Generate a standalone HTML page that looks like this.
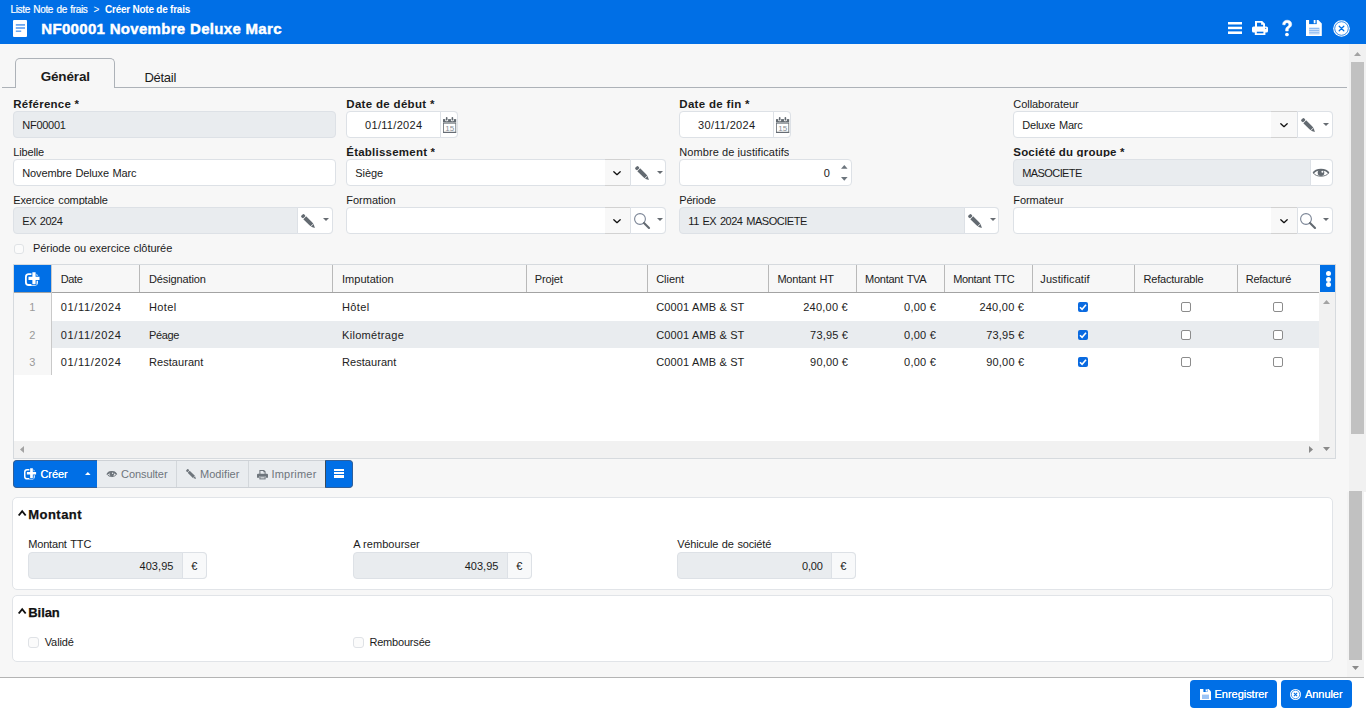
<!DOCTYPE html>
<html lang="fr">
<head>
<meta charset="utf-8">
<title>Note de frais</title>
<style>
*{box-sizing:border-box;margin:0;padding:0}
html,body{width:1370px;height:718px;overflow:hidden;background:#fff}
body{position:relative;font-family:"Liberation Sans",sans-serif;font-size:12px;color:#1b1b1b}
.abs{position:absolute}
.t{position:absolute;white-space:nowrap}
svg{position:absolute;display:block;overflow:visible}
</style>
</head>
<body>
<div class="abs" style="left:0px;top:0px;width:1366px;height:44px;background:#006fe6;"></div>
<div class="abs" style="left:0px;top:44px;width:1366px;height:633px;background:#f7f7f7;"></div>
<div class="abs" style="left:0px;top:677px;width:1364px;height:1px;background:#b4b4b4;"></div>
<div class="t" style="left:10.50px;top:3px;font-size:10px;line-height:13px;letter-spacing:-0.347px;color:#fff;word-spacing:1.00px;-webkit-text-stroke:0.2px #fff;">Liste Note de frais</div>
<div class="t" style="left:93.50px;top:3px;font-size:10px;line-height:13px;letter-spacing:0.160px;color:#fff;">&gt;</div>
<div class="t" style="left:105.00px;top:3px;font-size:10px;line-height:13px;letter-spacing:-0.236px;color:#fff;font-weight:bold;">Créer Note de frais</div>
<svg style="left:13px;top:20px" width="14" height="17" viewBox="0 0 14 17"><rect x="0" y="0" width="14" height="17" rx="1" fill="#fff"/><rect x="2.8" y="4.1" width="9.2" height="1.6" fill="#5c9ff0"/><rect x="2.8" y="7.2" width="9.2" height="1.6" fill="#5c9ff0"/><rect x="2.8" y="10.5" width="5.4" height="1.4" fill="#5c9ff0"/></svg>
<div class="t" style="left:41.30px;top:19px;font-size:15px;line-height:19px;letter-spacing:0.312px;color:#fff;font-weight:bold;-webkit-text-stroke:0.45px #fff;">NF00001 Novembre Deluxe Marc</div>
<svg style="left:1228px;top:22px" width="14" height="12" viewBox="0 0 14 12"><rect x="0" y="0" width="14" height="2.5" fill="#fff"/><rect x="0" y="4.7" width="14" height="2.5" fill="#fff"/><rect x="0" y="9.4" width="14" height="2.6" fill="#fff"/></svg>
<svg style="left:1252px;top:21px" width="16" height="14" viewBox="0 0 16 14"><path d="M3 0 H10.2 L13 2.8 V6.2 H3 Z" fill="#fff"/><path d="M5 1.7 H9.1 V3.7 H11.1 V6.2 H5 Z" fill="#006fe6"/><rect x="0" y="5.4" width="16" height="6.1" rx="1.6" fill="#fff"/><rect x="2.8" y="9" width="10.6" height="5" fill="#fff"/><rect x="4.8" y="10.7" width="6.6" height="1.6" fill="#006fe6"/><circle cx="13.7" cy="7.3" r="0.6" fill="#006fe6"/></svg>
<svg style="left:1282px;top:20px" width="10" height="16.5" viewBox="0 0 10 16.5"><path d="M0.6 4.6 C0.6 1.8 2.6 0.2 5.1 0.2 C7.8 0.2 9.7 1.8 9.7 4.2 C9.7 6.2 8.6 7 7.4 7.9 C6.5 8.6 6.3 9 6.3 10.3 V11 H3.6 V10 C3.6 8.3 4.2 7.5 5.3 6.7 C6.3 6 6.8 5.5 6.8 4.5 C6.8 3.4 6.1 2.7 5 2.7 C3.8 2.7 3.2 3.5 3.1 4.9 Z" fill="#fff" stroke="#fff" stroke-width="0.5"/><circle cx="4.95" cy="14.5" r="1.85" fill="#fff"/></svg>
<svg style="left:1306px;top:20px" width="16" height="16" viewBox="0 0 16 16"><path d="M0 0 H12.3 L15.8 3.5 V16 H0 Z" fill="#fff"/><rect x="3.1" y="-0.2" width="7.6" height="4.3" fill="#006fe6"/><rect x="7.7" y="0" width="1.8" height="3.3" fill="#fff"/><rect x="3.1" y="7.7" width="10.3" height="6.6" fill="#8fbcf3"/><rect x="3.1" y="9.2" width="10.3" height="0.8" fill="#dbe9fb"/><rect x="3.1" y="11" width="10.3" height="0.8" fill="#dbe9fb"/><rect x="3.1" y="12.8" width="10.3" height="0.8" fill="#dbe9fb"/></svg>
<svg style="left:1333px;top:19.7px" width="17" height="17" viewBox="0 0 17 17"><circle cx="8.5" cy="8.5" r="8.3" fill="#fff"/><circle cx="8.5" cy="8.5" r="6.8" fill="none" stroke="#006fe6" stroke-width="0.8"/><path d="M6.2 6.2 L10.8 10.8 M10.8 6.2 L6.2 10.8" stroke="#006fe6" stroke-width="1.25" stroke-linecap="round"/></svg>
<div class="abs" style="left:2px;top:87px;width:1345px;height:1px;background:#adb2b8;"></div>
<div class="abs" style="left:15px;top:58px;width:100px;height:30px;border:1px solid #adb2b8;border-bottom:none;border-radius:5px 5px 0 0;background:#f7f7f7;"></div>
<div class="t" style="left:40.65px;top:68px;font-size:13.5px;line-height:17px;letter-spacing:-0.139px;color:#1b1b1b;font-weight:bold;">Général</div>
<div class="t" style="left:144.50px;top:69px;font-size:13px;line-height:17px;letter-spacing:-0.289px;color:#1b1b1b;">Détail</div>
<div class="t" style="left:13.30px;top:97px;font-size:11.5px;line-height:14px;letter-spacing:0.247px;color:#1b1b1b;font-weight:bold;height:12px;overflow:hidden;">Référence *</div>
<div class="abs" style="left:13px;top:111px;width:323px;height:27px;border:1px solid #dde1e6;border-radius:4px;background:#e9ecef;"></div>
<div class="t" style="left:22.30px;top:118px;font-size:11px;line-height:14px;letter-spacing:-0.279px;color:#1b1b1b;">NF00001</div>
<div class="t" style="left:346.30px;top:97px;font-size:11.5px;line-height:14px;letter-spacing:0.313px;color:#1b1b1b;font-weight:bold;height:12px;overflow:hidden;">Date de début *</div>
<div class="abs" style="left:346px;top:111px;width:112px;height:27px;border:1px solid #dde1e6;border-radius:4px;background:#fff;"></div>
<div class="abs" style="left:440px;top:111px;width:18px;height:27px;border:1px solid #dde1e6;border-radius:0 4px 4px 0;background:#fff;"></div>
<div class="t" style="left:365.05px;top:118px;font-size:11px;line-height:14px;letter-spacing:0.306px;color:#1b1b1b;">01/11/2024</div>
<svg style="left:442.8px;top:117px" width="13.2" height="16" viewBox="0 0 13.2 16"><rect x="0" y="2.1" width="13.2" height="3.2" fill="#636a71"/><rect x="0" y="5.3" width="13.2" height="0.9" fill="#a3a8ad"/><rect x="0.4" y="6.2" width="12.4" height="9.2" fill="#fff" stroke="#636a71" stroke-width="0.8"/><rect x="0" y="14.8" width="13.2" height="1.1" fill="#636a71"/><rect x="2.2" y="1.7" width="3" height="2.5" rx="1" fill="#fff"/><rect x="7.9" y="1.7" width="3" height="2.5" rx="1" fill="#fff"/><rect x="2.9" y="0" width="1.6" height="3.5" rx="0.7" fill="#636a71"/><rect x="8.6" y="0" width="1.6" height="3.5" rx="0.7" fill="#636a71"/><text x="6.7" y="13.8" font-family="Liberation Sans, sans-serif" font-size="8" text-anchor="middle" fill="#8a8f95">15</text></svg>
<div class="t" style="left:679.30px;top:97px;font-size:11.5px;line-height:14px;letter-spacing:0.311px;color:#1b1b1b;font-weight:bold;height:12px;overflow:hidden;">Date de fin *</div>
<div class="abs" style="left:679px;top:111px;width:112px;height:27px;border:1px solid #dde1e6;border-radius:4px;background:#fff;"></div>
<div class="abs" style="left:773px;top:111px;width:18px;height:27px;border:1px solid #dde1e6;border-radius:0 4px 4px 0;background:#fff;"></div>
<div class="t" style="left:698.05px;top:118px;font-size:11px;line-height:14px;letter-spacing:0.306px;color:#1b1b1b;">30/11/2024</div>
<svg style="left:775.8px;top:117px" width="13.2" height="16" viewBox="0 0 13.2 16"><rect x="0" y="2.1" width="13.2" height="3.2" fill="#636a71"/><rect x="0" y="5.3" width="13.2" height="0.9" fill="#a3a8ad"/><rect x="0.4" y="6.2" width="12.4" height="9.2" fill="#fff" stroke="#636a71" stroke-width="0.8"/><rect x="0" y="14.8" width="13.2" height="1.1" fill="#636a71"/><rect x="2.2" y="1.7" width="3" height="2.5" rx="1" fill="#fff"/><rect x="7.9" y="1.7" width="3" height="2.5" rx="1" fill="#fff"/><rect x="2.9" y="0" width="1.6" height="3.5" rx="0.7" fill="#636a71"/><rect x="8.6" y="0" width="1.6" height="3.5" rx="0.7" fill="#636a71"/><text x="6.7" y="13.8" font-family="Liberation Sans, sans-serif" font-size="8" text-anchor="middle" fill="#8a8f95">15</text></svg>
<div class="t" style="left:1013.30px;top:97px;font-size:11px;line-height:14px;letter-spacing:-0.049px;color:#1b1b1b;height:12px;overflow:hidden;">Collaborateur</div>
<div class="abs" style="left:1013px;top:111px;width:320px;height:27px;border:1px solid #dde1e6;border-radius:4px;background:#fff;"></div>
<div class="t" style="left:1022.30px;top:118px;font-size:11px;line-height:14px;letter-spacing:-0.240px;color:#1b1b1b;word-spacing:1.10px;">Deluxe Marc</div>
<div class="abs" style="left:1271px;top:111px;width:26px;height:27px;background:#f8f8f8;border-top:1px solid #d2d2d2;border-bottom:1px solid #d2d2d2;"></div>
<div class="abs" style="left:1297px;top:111px;width:36px;height:27px;border:1px solid #dde1e6;border-radius:0 4px 4px 0;background:#fff;"></div>
<svg style="left:1279.8px;top:123.3px" width="8" height="4.4" viewBox="0 0 8 4.4"><path d="M0.8 0.7 L4 3.7 L7.2 0.7" fill="none" stroke="#111" stroke-width="1.3" stroke-linecap="round" stroke-linejoin="round"/></svg>
<svg style="left:1301px;top:117.5px" width="14.0" height="14.0" viewBox="0 0 14 14"><g fill="#636a71" transform="translate(1.6,1.6) rotate(45)"><rect x="-0.8" y="-2" width="3.2" height="4" rx="1.2"/><rect x="3.0" y="-2" width="10.2" height="4"/><path d="M13.7 -1.9 L17.4 0 L13.7 1.9 Z"/></g></svg>
<svg style="left:1323.2px;top:123.1px" width="6" height="3" viewBox="0 0 6 3"><path d="M0 0 H6 L3 3 Z" fill="#676c72"/></svg>
<div class="t" style="left:13.30px;top:145px;font-size:11px;line-height:14px;letter-spacing:-0.172px;color:#1b1b1b;height:12px;overflow:hidden;">Libelle</div>
<div class="abs" style="left:13px;top:159px;width:323px;height:27px;border:1px solid #dde1e6;border-radius:4px;background:#fff;"></div>
<div class="t" style="left:22.30px;top:166px;font-size:11px;line-height:14px;letter-spacing:-0.150px;color:#1b1b1b;word-spacing:0.77px;">Novembre Deluxe Marc</div>
<div class="t" style="left:346.30px;top:145px;font-size:11.5px;line-height:14px;letter-spacing:0.224px;color:#1b1b1b;font-weight:bold;height:12px;overflow:hidden;">Établissement *</div>
<div class="abs" style="left:346px;top:159px;width:320px;height:27px;border:1px solid #dde1e6;border-radius:4px;background:#fff;"></div>
<div class="t" style="left:355.30px;top:166px;font-size:11px;line-height:14px;letter-spacing:-0.072px;color:#1b1b1b;">Siège</div>
<div class="abs" style="left:605px;top:159px;width:25px;height:27px;background:#f8f8f8;border-top:1px solid #d2d2d2;border-bottom:1px solid #d2d2d2;"></div>
<div class="abs" style="left:630px;top:159px;width:36px;height:27px;border:1px solid #dde1e6;border-radius:0 4px 4px 0;background:#fff;"></div>
<svg style="left:613.3px;top:171.1px" width="8" height="4.4" viewBox="0 0 8 4.4"><path d="M0.8 0.7 L4 3.7 L7.2 0.7" fill="none" stroke="#111" stroke-width="1.3" stroke-linecap="round" stroke-linejoin="round"/></svg>
<svg style="left:635px;top:166px" width="14.0" height="14.0" viewBox="0 0 14 14"><g fill="#636a71" transform="translate(1.6,1.6) rotate(45)"><rect x="-0.8" y="-2" width="3.2" height="4" rx="1.2"/><rect x="3.0" y="-2" width="10.2" height="4"/><path d="M13.7 -1.9 L17.4 0 L13.7 1.9 Z"/></g></svg>
<svg style="left:657px;top:171.0px" width="6" height="3" viewBox="0 0 6 3"><path d="M0 0 H6 L3 3 Z" fill="#676c72"/></svg>
<div class="t" style="left:679.30px;top:145px;font-size:11px;line-height:14px;letter-spacing:0.082px;color:#1b1b1b;height:12px;overflow:hidden;">Nombre de justificatifs</div>
<div class="abs" style="left:679px;top:159px;width:173px;height:27px;border:1px solid #dde1e6;border-radius:4px;background:#fff;"></div>
<div class="t" style="left:823.70px;top:166px;font-size:11px;line-height:14px;letter-spacing:-0.518px;color:#1b1b1b;">0</div>
<svg style="left:840.7px;top:165px" width="6.6" height="3.8" viewBox="0 0 6.6 3.8"><path d="M0 3.8 L3.3 0 L6.6 3.8 Z" fill="#6c757d"/></svg>
<svg style="left:840.7px;top:176.6px" width="6.6" height="3.8" viewBox="0 0 6.6 3.8"><path d="M0 0 L3.3 3.8 L6.6 0 Z" fill="#6c757d"/></svg>
<div class="t" style="left:1013.30px;top:145px;font-size:11.5px;line-height:14px;letter-spacing:0.180px;color:#1b1b1b;font-weight:bold;height:12px;overflow:hidden;">Société du groupe *</div>
<div class="abs" style="left:1013px;top:159px;width:320px;height:27px;border:1px solid #dde1e6;border-radius:4px;background:#e9ecef;"></div>
<div class="t" style="left:1022.30px;top:166px;font-size:11px;line-height:14px;letter-spacing:-0.598px;color:#1b1b1b;">MASOCIETE</div>
<div class="abs" style="left:1310px;top:159px;width:23px;height:27px;border:1px solid #dde1e6;border-radius:0 4px 4px 0;background:#fff;"></div>
<svg style="left:1313.3px;top:167.8px" width="16" height="10" viewBox="0 0 16 10"><path d="M0.3 5 C3 9.3 13 9.3 15.7 5" fill="none" stroke="#636a71" stroke-width="0.9"/><path d="M0.3 5 C3 0.5 13 0.5 15.7 5" fill="none" stroke="#636a71" stroke-width="1.7"/><circle cx="8" cy="4.7" r="3.3" fill="#636a71"/><circle cx="9.4" cy="3.7" r="1" fill="#fff"/></svg>
<div class="t" style="left:13.30px;top:193px;font-size:11px;line-height:14px;letter-spacing:-0.149px;color:#1b1b1b;word-spacing:1.10px;height:12px;overflow:hidden;">Exercice comptable</div>
<div class="abs" style="left:13px;top:207px;width:320px;height:27px;border:1px solid #dde1e6;border-radius:4px;background:#e9ecef;"></div>
<div class="t" style="left:22.30px;top:214px;font-size:11px;line-height:14px;letter-spacing:-0.457px;color:#1b1b1b;word-spacing:1.10px;">EX 2024</div>
<div class="abs" style="left:297px;top:207px;width:36px;height:27px;border:1px solid #dde1e6;border-radius:0 4px 4px 0;background:#fff;"></div>
<svg style="left:301.4px;top:214px" width="14.0" height="14.0" viewBox="0 0 14 14"><g fill="#636a71" transform="translate(1.6,1.6) rotate(45)"><rect x="-0.8" y="-2" width="3.2" height="4" rx="1.2"/><rect x="3.0" y="-2" width="10.2" height="4"/><path d="M13.7 -1.9 L17.4 0 L13.7 1.9 Z"/></g></svg>
<svg style="left:322.9px;top:218.0px" width="6" height="3" viewBox="0 0 6 3"><path d="M0 0 H6 L3 3 Z" fill="#676c72"/></svg>
<div class="t" style="left:346.30px;top:193px;font-size:11px;line-height:14px;letter-spacing:-0.013px;color:#1b1b1b;height:12px;overflow:hidden;">Formation</div>
<div class="abs" style="left:346px;top:207px;width:320px;height:27px;border:1px solid #dde1e6;border-radius:4px;background:#fff;"></div>
<div class="abs" style="left:605px;top:207px;width:25px;height:27px;background:#f8f8f8;border-top:1px solid #d2d2d2;border-bottom:1px solid #d2d2d2;"></div>
<div class="abs" style="left:630px;top:207px;width:36px;height:27px;border:1px solid #dde1e6;border-radius:0 4px 4px 0;background:#fff;"></div>
<svg style="left:613.3px;top:219.1px" width="8" height="4.4" viewBox="0 0 8 4.4"><path d="M0.8 0.7 L4 3.7 L7.2 0.7" fill="none" stroke="#111" stroke-width="1.3" stroke-linecap="round" stroke-linejoin="round"/></svg>
<svg style="left:633.5px;top:212.9px" width="17" height="17" viewBox="0 0 17 17"><circle cx="6" cy="6" r="5.4" fill="none" stroke="#7b8596" stroke-width="1.1"/><path d="M10 10 L15 15" stroke="#636a71" stroke-width="2.1" stroke-linecap="round"/></svg>
<svg style="left:657px;top:218.0px" width="6" height="3" viewBox="0 0 6 3"><path d="M0 0 H6 L3 3 Z" fill="#676c72"/></svg>
<div class="t" style="left:679.30px;top:193px;font-size:11px;line-height:14px;letter-spacing:-0.216px;color:#1b1b1b;height:12px;overflow:hidden;">Période</div>
<div class="abs" style="left:679px;top:207px;width:320px;height:27px;border:1px solid #dde1e6;border-radius:4px;background:#e9ecef;"></div>
<div class="t" style="left:688.30px;top:214px;font-size:11px;line-height:14px;letter-spacing:-0.466px;color:#1b1b1b;word-spacing:1.10px;">11 EX 2024 MASOCIETE</div>
<div class="abs" style="left:964px;top:207px;width:35px;height:27px;border:1px solid #dde1e6;border-radius:0 4px 4px 0;background:#fff;"></div>
<svg style="left:967.8px;top:214px" width="14.0" height="14.0" viewBox="0 0 14 14"><g fill="#636a71" transform="translate(1.6,1.6) rotate(45)"><rect x="-0.8" y="-2" width="3.2" height="4" rx="1.2"/><rect x="3.0" y="-2" width="10.2" height="4"/><path d="M13.7 -1.9 L17.4 0 L13.7 1.9 Z"/></g></svg>
<svg style="left:990px;top:218.0px" width="6" height="3" viewBox="0 0 6 3"><path d="M0 0 H6 L3 3 Z" fill="#676c72"/></svg>
<div class="t" style="left:1013.30px;top:193px;font-size:11px;line-height:14px;letter-spacing:-0.059px;color:#1b1b1b;height:12px;overflow:hidden;">Formateur</div>
<div class="abs" style="left:1013px;top:207px;width:320px;height:27px;border:1px solid #dde1e6;border-radius:4px;background:#fff;"></div>
<div class="abs" style="left:1271px;top:207px;width:26px;height:27px;background:#f8f8f8;border-top:1px solid #d2d2d2;border-bottom:1px solid #d2d2d2;"></div>
<div class="abs" style="left:1297px;top:207px;width:36px;height:27px;border:1px solid #dde1e6;border-radius:0 4px 4px 0;background:#fff;"></div>
<svg style="left:1279.8px;top:219.1px" width="8" height="4.4" viewBox="0 0 8 4.4"><path d="M0.8 0.7 L4 3.7 L7.2 0.7" fill="none" stroke="#111" stroke-width="1.3" stroke-linecap="round" stroke-linejoin="round"/></svg>
<svg style="left:1300.2px;top:212.9px" width="17" height="17" viewBox="0 0 17 17"><circle cx="6" cy="6" r="5.4" fill="none" stroke="#7b8596" stroke-width="1.1"/><path d="M10 10 L15 15" stroke="#636a71" stroke-width="2.1" stroke-linecap="round"/></svg>
<svg style="left:1323.2px;top:218.0px" width="6" height="3" viewBox="0 0 6 3"><path d="M0 0 H6 L3 3 Z" fill="#676c72"/></svg>
<div class="abs" style="left:14px;top:243.5px;width:10px;height:10px;border:1px solid #e0e3e6;border-radius:3px;background:#fbfbfb;"></div>
<div class="t" style="left:32.90px;top:241px;font-size:11px;line-height:14px;letter-spacing:-0.044px;color:#1b1b1b;word-spacing:0.40px;">Période ou exercice clôturée</div>
<div class="abs" style="left:13px;top:264px;width:1323px;height:195px;border:1px solid #d6dade;background:#fff;"></div>
<div class="abs" style="left:14px;top:265px;width:1306px;height:27px;background:#f7f7f7;"></div>
<div class="abs" style="left:14px;top:292px;width:1306px;height:1px;background:#a3a3a3;"></div>
<div class="abs" style="left:14px;top:265px;width:37px;height:27px;background:#006fe6;"></div>
<svg style="left:25.4px;top:272.3px" width="14.639999999999999" height="13.92" viewBox="0 0 12.2 11.6"><rect x="0.75" y="1.8" width="9.3" height="9.05" rx="2.4" fill="none" stroke="#fff" stroke-width="1.5"/><path d="M7.5 0 V11 M2.1 5.25 H12.2" stroke="#006fe6" stroke-width="4.2"/><path d="M7.5 0.2 V10.2 M2.9 5.25 H12.1" stroke="#fff" stroke-width="2.7"/></svg>
<div class="abs" style="left:14px;top:293px;width:37px;height:82px;background:#f7f7f7;"></div>
<div class="abs" style="left:51px;top:265px;width:1px;height:110px;background:#c9c9c9;"></div>
<div class="abs" style="left:52px;top:321px;width:1267px;height:27px;background:#e9ecef;"></div>
<div class="abs" style="left:139px;top:265px;width:1px;height:27px;background:#b9b9b9;"></div>
<div class="abs" style="left:332px;top:265px;width:1px;height:27px;background:#b9b9b9;"></div>
<div class="abs" style="left:526px;top:265px;width:1px;height:27px;background:#b9b9b9;"></div>
<div class="abs" style="left:647px;top:265px;width:1px;height:27px;background:#b9b9b9;"></div>
<div class="abs" style="left:768px;top:265px;width:1px;height:27px;background:#b9b9b9;"></div>
<div class="abs" style="left:856px;top:265px;width:1px;height:27px;background:#b9b9b9;"></div>
<div class="abs" style="left:944px;top:265px;width:1px;height:27px;background:#b9b9b9;"></div>
<div class="abs" style="left:1032px;top:265px;width:1px;height:27px;background:#b9b9b9;"></div>
<div class="abs" style="left:1134px;top:265px;width:1px;height:27px;background:#b9b9b9;"></div>
<div class="abs" style="left:1237px;top:265px;width:1px;height:27px;background:#b9b9b9;"></div>
<div class="t" style="left:60.80px;top:272px;font-size:11px;line-height:14px;letter-spacing:-0.409px;color:#222;">Date</div>
<div class="t" style="left:149.00px;top:272px;font-size:11px;line-height:14px;letter-spacing:-0.127px;color:#222;">Désignation</div>
<div class="t" style="left:342.00px;top:272px;font-size:11px;line-height:14px;letter-spacing:0.034px;color:#222;">Imputation</div>
<div class="t" style="left:534.80px;top:272px;font-size:11px;line-height:14px;letter-spacing:-0.139px;color:#222;">Projet</div>
<div class="t" style="left:656.20px;top:272px;font-size:11px;line-height:14px;letter-spacing:-0.037px;color:#222;">Client</div>
<div class="t" style="left:777.40px;top:272px;font-size:11px;line-height:14px;letter-spacing:-0.200px;color:#222;word-spacing:0.93px;">Montant HT</div>
<div class="t" style="left:865.10px;top:272px;font-size:11px;line-height:14px;letter-spacing:-0.271px;color:#222;word-spacing:1.10px;">Montant TVA</div>
<div class="t" style="left:953.20px;top:272px;font-size:11px;line-height:14px;letter-spacing:-0.362px;color:#222;word-spacing:1.10px;">Montant TTC</div>
<div class="t" style="left:1040.30px;top:272px;font-size:11px;line-height:14px;letter-spacing:0.092px;color:#222;">Justificatif</div>
<div class="t" style="left:1143.60px;top:272px;font-size:11px;line-height:14px;letter-spacing:-0.222px;color:#222;">Refacturable</div>
<div class="t" style="left:1245.80px;top:272px;font-size:11px;line-height:14px;letter-spacing:-0.266px;color:#222;">Refacturé</div>
<div class="t" style="left:29.33px;top:300px;font-size:11px;line-height:14px;letter-spacing:0.222px;color:#9a9a9a;">1</div>
<div class="t" style="left:60.80px;top:300px;font-size:11px;line-height:14px;letter-spacing:0.636px;color:#222;">01/11/2024</div>
<div class="t" style="left:149.00px;top:300px;font-size:11px;line-height:14px;letter-spacing:0.364px;color:#222;">Hotel</div>
<div class="t" style="left:342.00px;top:300px;font-size:11px;line-height:14px;letter-spacing:0.364px;color:#222;">Hôtel</div>
<div class="t" style="left:656.20px;top:300px;font-size:11px;line-height:14px;letter-spacing:0.150px;color:#222;">C0001 AMB &amp; ST</div>
<div class="t" style="left:803.20px;top:300px;font-size:11px;line-height:14px;letter-spacing:0.248px;color:#222;">240,00 €</div>
<div class="t" style="left:904.10px;top:300px;font-size:11px;line-height:14px;letter-spacing:0.219px;color:#222;">0,00 €</div>
<div class="t" style="left:979.40px;top:300px;font-size:11px;line-height:14px;letter-spacing:0.248px;color:#222;">240,00 €</div>
<div class="abs" style="left:1078.2px;top:302.2px;width:10px;height:10px;background:#0a6ae0;border-radius:2px;"></div>
<svg style="left:1078.2px;top:302.2px" width="10" height="10" viewBox="0 0 10 10"><path d="M2 5.2 L4.1 7.3 L8 2.8" fill="none" stroke="#fff" stroke-width="1.6"/></svg>
<div class="abs" style="left:1181.2px;top:302.2px;width:10px;height:10px;background:#fff;border:1px solid #8c8c8c;border-radius:2px;"></div>
<div class="abs" style="left:1273px;top:302.2px;width:10px;height:10px;background:#fff;border:1px solid #8c8c8c;border-radius:2px;"></div>
<div class="t" style="left:29.33px;top:328px;font-size:11px;line-height:14px;letter-spacing:0.222px;color:#9a9a9a;">2</div>
<div class="t" style="left:60.80px;top:328px;font-size:11px;line-height:14px;letter-spacing:0.636px;color:#222;">01/11/2024</div>
<div class="t" style="left:149.00px;top:328px;font-size:11px;line-height:14px;letter-spacing:-0.382px;color:#222;">Péage</div>
<div class="t" style="left:342.00px;top:328px;font-size:11px;line-height:14px;letter-spacing:0.310px;color:#222;">Kilométrage</div>
<div class="t" style="left:656.20px;top:328px;font-size:11px;line-height:14px;letter-spacing:0.150px;color:#222;">C0001 AMB &amp; ST</div>
<div class="t" style="left:810.10px;top:328px;font-size:11px;line-height:14px;letter-spacing:0.171px;color:#222;">73,95 €</div>
<div class="t" style="left:904.10px;top:328px;font-size:11px;line-height:14px;letter-spacing:0.219px;color:#222;">0,00 €</div>
<div class="t" style="left:986.30px;top:328px;font-size:11px;line-height:14px;letter-spacing:0.171px;color:#222;">73,95 €</div>
<div class="abs" style="left:1078.2px;top:330.2px;width:10px;height:10px;background:#0a6ae0;border-radius:2px;"></div>
<svg style="left:1078.2px;top:330.2px" width="10" height="10" viewBox="0 0 10 10"><path d="M2 5.2 L4.1 7.3 L8 2.8" fill="none" stroke="#fff" stroke-width="1.6"/></svg>
<div class="abs" style="left:1181.2px;top:330.2px;width:10px;height:10px;background:#fff;border:1px solid #8c8c8c;border-radius:2px;"></div>
<div class="abs" style="left:1273px;top:330.2px;width:10px;height:10px;background:#fff;border:1px solid #8c8c8c;border-radius:2px;"></div>
<div class="t" style="left:29.33px;top:355px;font-size:11px;line-height:14px;letter-spacing:0.222px;color:#9a9a9a;">3</div>
<div class="t" style="left:60.80px;top:355px;font-size:11px;line-height:14px;letter-spacing:0.636px;color:#222;">01/11/2024</div>
<div class="t" style="left:149.00px;top:355px;font-size:11px;line-height:14px;letter-spacing:0.059px;color:#222;">Restaurant</div>
<div class="t" style="left:342.00px;top:355px;font-size:11px;line-height:14px;letter-spacing:0.059px;color:#222;">Restaurant</div>
<div class="t" style="left:656.20px;top:355px;font-size:11px;line-height:14px;letter-spacing:0.150px;color:#222;">C0001 AMB &amp; ST</div>
<div class="t" style="left:810.10px;top:355px;font-size:11px;line-height:14px;letter-spacing:0.171px;color:#222;">90,00 €</div>
<div class="t" style="left:904.10px;top:355px;font-size:11px;line-height:14px;letter-spacing:0.219px;color:#222;">0,00 €</div>
<div class="t" style="left:986.30px;top:355px;font-size:11px;line-height:14px;letter-spacing:0.171px;color:#222;">90,00 €</div>
<div class="abs" style="left:1078.2px;top:357.2px;width:10px;height:10px;background:#0a6ae0;border-radius:2px;"></div>
<svg style="left:1078.2px;top:357.2px" width="10" height="10" viewBox="0 0 10 10"><path d="M2 5.2 L4.1 7.3 L8 2.8" fill="none" stroke="#fff" stroke-width="1.6"/></svg>
<div class="abs" style="left:1181.2px;top:357.2px;width:10px;height:10px;background:#fff;border:1px solid #8c8c8c;border-radius:2px;"></div>
<div class="abs" style="left:1273px;top:357.2px;width:10px;height:10px;background:#fff;border:1px solid #8c8c8c;border-radius:2px;"></div>
<div class="abs" style="left:1320px;top:265px;width:15px;height:27px;background:#006fe6;"></div>
<div class="abs" style="left:1325.8px;top:271.0px;width:5px;height:5px;background:#fff;border-radius:50%;"></div>
<div class="abs" style="left:1325.8px;top:276.5px;width:5px;height:5px;background:#fff;border-radius:50%;"></div>
<div class="abs" style="left:1325.8px;top:282.0px;width:5px;height:5px;background:#fff;border-radius:50%;"></div>
<div class="abs" style="left:1319px;top:292px;width:16px;height:149px;background:#f1f1f1;"></div>
<div class="abs" style="left:14px;top:441px;width:1321px;height:17px;background:#f1f1f1;"></div>
<svg style="left:1323px;top:300px" width="7" height="4" viewBox="0 0 7 4"><path d="M0 4 L3.5 0 L7 4 Z" fill="#a3a3a3"/></svg>
<svg style="left:1323px;top:447px" width="7" height="4" viewBox="0 0 7 4"><path d="M0 0 L3.5 4 L7 0 Z" fill="#8a8a8a"/></svg>
<svg style="left:20px;top:446px" width="4" height="7" viewBox="0 0 4 7"><path d="M4 0 L0 3.5 L4 7 Z" fill="#a3a3a3"/></svg>
<svg style="left:1309px;top:446px" width="4" height="7" viewBox="0 0 4 7"><path d="M0 0 L4 3.5 L0 7 Z" fill="#8a8a8a"/></svg>
<div class="abs" style="left:13px;top:460px;width:340px;height:28px;background:#e9ecef;border:1px solid #cdd1d6;border-radius:4px;"></div>
<div class="abs" style="left:13px;top:460px;width:84px;height:28px;background:#006fe6;border-radius:4px 0 0 4px;border:1px solid #2f5f9a;border-right:none;"></div>
<div class="abs" style="left:325px;top:460px;width:28px;height:28px;background:#006fe6;border-radius:0 4px 4px 0;border:1px solid #2f5f9a;border-left:1px solid #3a4a5a;"></div>
<div class="abs" style="left:176px;top:461px;width:1px;height:26px;background:#d3d7db;"></div>
<div class="abs" style="left:248px;top:461px;width:1px;height:26px;background:#d3d7db;"></div>
<svg style="left:23.5px;top:468.2px" width="12.2" height="11.6" viewBox="0 0 12.2 11.6"><rect x="0.75" y="1.8" width="9.3" height="9.05" rx="2.4" fill="none" stroke="#fff" stroke-width="1.5"/><path d="M7.5 0 V11 M2.1 5.25 H12.2" stroke="#006fe6" stroke-width="4.2"/><path d="M7.5 0.2 V10.2 M2.9 5.25 H12.1" stroke="#fff" stroke-width="2.7"/></svg>
<div class="t" style="left:40.50px;top:467px;font-size:11px;line-height:14px;letter-spacing:-0.101px;color:#fff;text-shadow:0 0 0.4px #fff;">Créer</div>
<svg style="left:85.2px;top:472.4px" width="5.6" height="3" viewBox="0 0 5.6 3"><path d="M0 3 L2.8 0 L5.6 3 Z" fill="#fff"/></svg>
<svg style="left:107.2px;top:470.8px" width="9.6" height="6.4" viewBox="0 0 9.6 6.4"><path d="M0 3.2 C2 0 7.6 0 9.6 3.2 C7.6 6.4 2 6.4 0 3.2 Z" fill="none" stroke="#6e757c" stroke-width="1"/><path d="M0.3 3 C2.2 0.2 7.4 0.2 9.3 3" fill="none" stroke="#6e757c" stroke-width="1.7"/><circle cx="4.8" cy="3.1" r="2.4" fill="#6e757c"/><circle cx="5.6" cy="2.3" r="0.7" fill="#e9ecef"/></svg>
<div class="t" style="left:121.00px;top:467px;font-size:11px;line-height:14px;letter-spacing:-0.064px;color:#6e757c;">Consulter</div>
<svg style="left:185.8px;top:469.1px" width="10.08" height="10.08" viewBox="0 0 14 14"><g fill="#6e757c" transform="translate(1.6,1.6) rotate(45)"><rect x="-0.8" y="-2" width="3.2" height="4" rx="1.2"/><rect x="3.0" y="-2" width="10.2" height="4"/><path d="M13.7 -1.9 L17.4 0 L13.7 1.9 Z"/></g></svg>
<div class="t" style="left:200.00px;top:467px;font-size:11px;line-height:14px;letter-spacing:0.047px;color:#6e757c;">Modifier</div>
<svg style="left:257.1px;top:469.6px" width="11" height="9.4" viewBox="0 0 11 9.4"><path d="M2.4 0 H7 L8.6 1.6 V4 H2.4 Z" fill="#6e757c"/><path d="M3.4 1 H6.4 V2.2 H7.6 V4 H3.4 Z" fill="#e9ecef"/><path d="M1 3.7 H10 A1 1 0 0 1 11 4.7 V7.8 H8.8 V6.2 H2.2 V7.8 H0 V4.7 A1 1 0 0 1 1 3.7 Z" fill="#6e757c"/><path d="M2.4 6.4 H8.6 V9.4 H2.4 Z" fill="#6e757c"/><rect x="3.4" y="7.3" width="4.2" height="1.1" fill="#e9ecef"/></svg>
<div class="t" style="left:271.50px;top:467px;font-size:11px;line-height:14px;letter-spacing:0.202px;color:#6e757c;">Imprimer</div>
<div class="abs" style="left:334.3px;top:468.8px;width:10.2px;height:2.2px;background:#fff;"></div>
<div class="abs" style="left:334.3px;top:472.1px;width:10.2px;height:2.2px;background:#fff;"></div>
<div class="abs" style="left:334.3px;top:475.40000000000003px;width:10.2px;height:2.2px;background:#fff;"></div>
<div class="abs" style="left:12px;top:497px;width:1321px;height:93px;background:#fff;border:1px solid #e1e4e8;border-radius:5px;"></div>
<div class="abs" style="left:12px;top:595px;width:1321px;height:67px;background:#fff;border:1px solid #e1e4e8;border-radius:5px;"></div>
<svg style="left:18.2px;top:510.3px" width="8.4" height="6" viewBox="0 0 8.4 6"><path d="M0.7 5.5 L4.2 1.2 L7.7 5.5" fill="none" stroke="#111" stroke-width="1.9"/></svg>
<div class="t" style="left:28.30px;top:506px;font-size:13px;line-height:17px;letter-spacing:0.451px;color:#111;font-weight:bold;-webkit-text-stroke:0.25px #111;">Montant</div>
<svg style="left:18.2px;top:608.3px" width="8.4" height="6" viewBox="0 0 8.4 6"><path d="M0.7 5.5 L4.2 1.2 L7.7 5.5" fill="none" stroke="#111" stroke-width="1.9"/></svg>
<div class="t" style="left:28.30px;top:604px;font-size:13px;line-height:17px;letter-spacing:-0.077px;color:#111;font-weight:bold;-webkit-text-stroke:0.25px #111;">Bilan</div>
<div class="t" style="left:28.20px;top:537px;font-size:11px;line-height:14px;letter-spacing:-0.171px;color:#1b1b1b;word-spacing:0.89px;">Montant TTC</div>
<div class="abs" style="left:28px;top:552px;width:179px;height:27px;border:1px solid #dde1e6;border-radius:4px;background:#e9ecef;"></div>
<div class="abs" style="left:182px;top:552px;width:25px;height:27px;border:1px solid #dde1e6;border-radius:0 4px 4px 0;background:#f8f9fa;"></div>
<div class="t" style="left:139.50px;top:559px;font-size:11px;line-height:14px;letter-spacing:0.059px;color:#1b1b1b;">403,95</div>
<div class="t" style="left:191.13px;top:559px;font-size:11px;line-height:14px;letter-spacing:0.222px;color:#1b1b1b;">€</div>
<div class="t" style="left:353.20px;top:537px;font-size:11px;line-height:14px;letter-spacing:0.048px;color:#1b1b1b;">A rembourser</div>
<div class="abs" style="left:353px;top:552px;width:179px;height:27px;border:1px solid #dde1e6;border-radius:4px;background:#e9ecef;"></div>
<div class="abs" style="left:507px;top:552px;width:25px;height:27px;border:1px solid #dde1e6;border-radius:0 4px 4px 0;background:#f8f9fa;"></div>
<div class="t" style="left:464.70px;top:559px;font-size:11px;line-height:14px;letter-spacing:0.026px;color:#1b1b1b;">403,95</div>
<div class="t" style="left:516.13px;top:559px;font-size:11px;line-height:14px;letter-spacing:0.222px;color:#1b1b1b;">€</div>
<div class="t" style="left:677.20px;top:537px;font-size:11px;line-height:14px;letter-spacing:-0.152px;color:#1b1b1b;word-spacing:0.75px;">Véhicule de société</div>
<div class="abs" style="left:677px;top:552px;width:179px;height:27px;border:1px solid #dde1e6;border-radius:4px;background:#e9ecef;"></div>
<div class="abs" style="left:831px;top:552px;width:25px;height:27px;border:1px solid #dde1e6;border-radius:0 4px 4px 0;background:#f8f9fa;"></div>
<div class="t" style="left:802.10px;top:559px;font-size:11px;line-height:14px;letter-spacing:-0.252px;color:#1b1b1b;">0,00</div>
<div class="t" style="left:840.13px;top:559px;font-size:11px;line-height:14px;letter-spacing:0.222px;color:#1b1b1b;">€</div>
<div class="abs" style="left:28px;top:637px;width:11px;height:11px;border:1px solid #dfe2e6;border-radius:3px;background:#fbfbfb;"></div>
<div class="t" style="left:44.70px;top:635px;font-size:11px;line-height:14px;letter-spacing:-0.094px;color:#1b1b1b;">Validé</div>
<div class="abs" style="left:353px;top:637px;width:11px;height:11px;border:1px solid #dfe2e6;border-radius:3px;background:#fbfbfb;"></div>
<div class="t" style="left:369.40px;top:635px;font-size:11px;line-height:14px;letter-spacing:-0.188px;color:#1b1b1b;">Remboursée</div>
<div class="abs" style="left:1349px;top:44px;width:17px;height:449px;background:#f1f1f1;"></div>
<div class="abs" style="left:1351px;top:62px;width:13px;height:372px;background:#c1c1c1;"></div>
<svg style="left:1354px;top:52px" width="7" height="4" viewBox="0 0 7 4"><path d="M0 4 L3.5 0 L7 4 Z" fill="#a3a3a3"/></svg>
<div class="abs" style="left:1364px;top:492px;width:2px;height:185px;background:#fff;"></div>
<div class="abs" style="left:1347px;top:492px;width:17px;height:185px;background:#f3f3f3;"></div>
<div class="abs" style="left:1349px;top:491px;width:13px;height:169px;background:#c1c1c1;"></div>
<svg style="left:1352px;top:666px" width="7" height="4" viewBox="0 0 7 4"><path d="M0 0 L3.5 4 L7 0 Z" fill="#8a8a8a"/></svg>
<div class="abs" style="left:1190px;top:680px;width:87px;height:28px;background:#006fe6;border-radius:4px;"></div>
<div class="abs" style="left:1281px;top:680px;width:71px;height:28px;background:#006fe6;border-radius:4px;"></div>
<svg style="left:1200px;top:688.5px" width="11" height="11" viewBox="0 0 11 11"><path d="M0 0 H8.6 L11 2.4 V11 H0 Z" fill="#fff"/><rect x="3.4" y="0" width="4" height="3" fill="#006fe6"/><rect x="5.6" y="0.4" width="1.4" height="2.2" fill="#fff"/><rect x="2" y="5.6" width="7" height="4.4" fill="#9cc4f5"/></svg>
<div class="t" style="left:1214.50px;top:687px;font-size:11px;line-height:14px;letter-spacing:-0.027px;color:#fff;text-shadow:0 0 0.4px #fff;">Enregistrer</div>
<svg style="left:1290px;top:688.5px" width="11" height="11" viewBox="0 0 11 11"><circle cx="5.5" cy="5.5" r="5.5" fill="#fff"/><circle cx="5.5" cy="5.5" r="4.2" fill="none" stroke="#006fe6" stroke-width="0.7"/><path d="M3.9 3.9 L7.1 7.1 M7.1 3.9 L3.9 7.1" stroke="#006fe6" stroke-width="1.1"/></svg>
<div class="t" style="left:1305.00px;top:687px;font-size:11px;line-height:14px;letter-spacing:-0.059px;color:#fff;text-shadow:0 0 0.4px #fff;">Annuler</div>
</body>
</html>
